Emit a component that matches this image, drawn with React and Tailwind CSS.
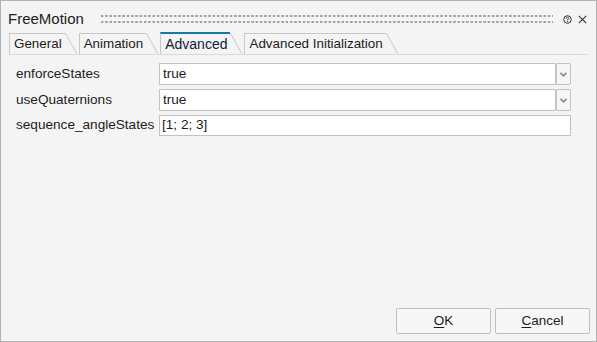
import React from 'react';

const tabs = [
    { label: 'General' },
    { label: 'Animation' },
    { label: 'Advanced', active: true },
    { label: 'Advanced Initialization' },
];

const Tab = ({ label, active }) => (
    <div className={`flex items-stretch ${active ? 'h-[22px]' : 'h-[21px]'}`}>
        <div
            className={`flex items-center border-l border-[#c8c8c8] pl-[4px] pr-[3px] ${
                active ? 'border-t-2 border-t-[#1479a8] text-[14px] text-[#10203a]' : 'border-t text-[13.4px] text-[#1c1c1c]'
            }`}
        >
            {label}
        </div>
        <svg width="12" height={active ? 22 : 21} className="shrink-0">
            <path
                d={active ? 'M0 1.5 L0.5 1.5 L12 22' : 'M0 0.5 L0.5 0.5 L12 21'}
                stroke="#c8c8c8"
                strokeWidth="1"
                fill="none"
            />
        </svg>
    </div>
);

const Chevron = () => (
    <svg width="7" height="5" viewBox="0 0 7 5">
        <path d="M0.5 0.8 L3.5 3.8 L6.5 0.8" stroke="#8c8c8c" strokeWidth="1.6" fill="none" />
    </svg>
);

const SelectRow = ({ label, value }) => (
    <div className="flex items-center h-[22px]">
        <div className="w-[143px] shrink-0">{label}</div>
        <div className="w-[397px] h-full bg-white border border-[#c2c2c2] flex items-center pl-[3px]">{value}</div>
        <div className="w-[15px] h-full border border-[#c2c2c2] rounded-[2px] bg-[#f6f6f6] flex items-center justify-center">
            <Chevron />
        </div>
    </div>
);

export default function App() {
    return (
        <div
            className="w-[597px] h-[342px] bg-[#f4f4f4] border border-[#b2b2b2] flex flex-col text-[#1c1c1c] overflow-hidden"
            style={{ fontFamily: '"Liberation Sans", Arial, sans-serif' }}
        >
            {/* title bar */}
            <div className="flex items-center h-[22px] mt-[7px] pl-[7px] pr-[9px]">
                <span className="text-[15px] text-[#202020]">FreeMotion</span>
                <div className="flex-1 ml-[16px] h-[12px] bg-[radial-gradient(circle,#a4a4a4_1px,transparent_1.3px)] bg-[length:4.3px_6px]" />
                <svg width="9" height="9" viewBox="0 0 9 9" className="ml-[10px]">
                    <circle cx="4.5" cy="4.5" r="3.8" stroke="#333" strokeWidth="1" fill="none" />
                    <path d="M3.2 3.6 Q3.2 2.3 4.5 2.3 Q5.8 2.3 5.8 3.4 Q5.8 4.2 4.5 4.6 L4.5 5.4" stroke="#333" strokeWidth="0.9" fill="none" />
                    <circle cx="4.5" cy="6.6" r="0.55" fill="#333" />
                </svg>
                <svg width="9" height="9" viewBox="0 0 9 9" className="ml-[6px]">
                    <path d="M0.8 0.8 L8.2 8.2 M8.2 0.8 L0.8 8.2" stroke="#333" strokeWidth="1.1" />
                </svg>
            </div>

            {/* tabs */}
            <div className="flex items-end gap-[2px] ml-[8px] mr-[8px] mt-[2px] border-b border-[#dadada]">
                {tabs.map((t) => (
                    <Tab key={t.label} {...t} />
                ))}
            </div>

            {/* properties */}
            <div className="flex flex-col gap-[4px] mt-[8px] ml-[15px] text-[13.6px]">
                <SelectRow label="enforceStates" value="true" />
                <SelectRow label="useQuaternions" value="true" />
                <div className="flex items-center h-[21px]">
                    <div className="w-[143px] shrink-0">sequence_angleStates</div>
                    <div className="w-[412px] h-full bg-white border border-[#c2c2c2] flex items-center pl-[2px]">[1; 2; 3]</div>
                </div>
            </div>

            {/* buttons */}
            <div className="mt-auto flex justify-end gap-[4px] pr-[6px] pb-[7px] text-[13.5px]">
                <button className="w-[95px] h-[26px] border border-[#c0c0c0] rounded-[2px] bg-[#f7f7f7]">
                    <span className="underline underline-offset-2">O</span>K
                </button>
                <button className="w-[95px] h-[26px] border border-[#c0c0c0] rounded-[2px] bg-[#f7f7f7]">
                    <span className="underline underline-offset-2">C</span>ancel
                </button>
            </div>
        </div>
    );
}
